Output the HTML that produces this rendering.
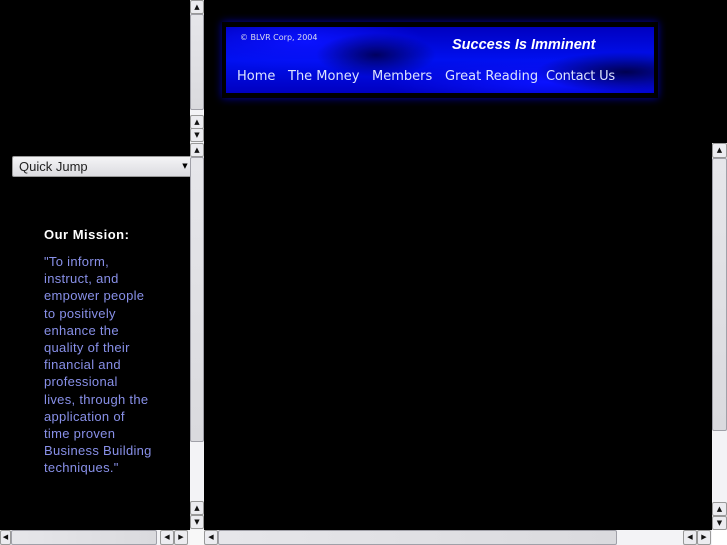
<!DOCTYPE html>
<html><head><meta charset="utf-8"><style>
*{margin:0;padding:0;box-sizing:border-box}
body{width:727px;height:545px;background:#000;position:relative;overflow:hidden;font-family:"DejaVu Sans","Liberation Sans",sans-serif}
.a{position:absolute}
.tr{background:#f3f3f6}
.th{background:linear-gradient(90deg,#e6e6ea,#dadade);border:1px solid #a0a0a8;border-radius:2px}
.thv{background:linear-gradient(180deg,#e6e6ea,#dadade);border:1px solid #a0a0a8;border-radius:2px}
.b{background:#ececf0;border:1px solid #999;border-radius:2px;font-size:7px;line-height:12px;text-align:center;color:#111}
.n{position:absolute;top:69px;font-size:13px;color:#dde4ff}
</style></head><body>
<div class="a" style="left:222px;top:22px;width:436px;height:76px;background:#000;box-shadow:0 0 8px #0000aa"></div>
<div class="a" style="left:226px;top:27px;width:428px;height:66px;background:radial-gradient(ellipse 60px 22px at 150px 28px,#000060,transparent),radial-gradient(ellipse 90px 20px at 400px 45px,#000050,transparent),radial-gradient(ellipse 120px 30px at 80px 15px,#0a12ff,transparent),radial-gradient(ellipse 160px 25px at 320px 55px,#0a12ff,transparent),linear-gradient(180deg,#0000c0,#0010f0 50%,#0000c0);"></div>
<div class="a" style="left:240px;top:33px;font-size:8px;color:#dde">© BLVR Corp, 2004</div>
<div class="a" style="left:452px;top:37px;font-family:'Liberation Sans',sans-serif;font-style:italic;font-weight:bold;font-size:14.5px;color:#fff">Success Is Imminent</div>
<div class="n" style="left:237px">Home</div>
<div class="n" style="left:288px">The Money</div>
<div class="n" style="left:372px">Members</div>
<div class="n" style="left:445px">Great Reading</div>
<div class="n" style="left:546px;letter-spacing:-0.2px">Contact Us</div>
<div class="a" style="left:12px;top:156px;width:182px;height:21px;background:linear-gradient(#f4f4f6,#dcdce0);border:1px solid #999;border-radius:2px;font-size:13px;line-height:19px;padding-left:6px;color:#222;font-family:'Liberation Sans',sans-serif">Quick Jump</div>
<div class="a" style="left:180px;top:157px;width:10px;height:19px;font-size:7px;line-height:19px;text-align:center">▼</div>
<div class="a" style="left:44px;top:227px;font-size:13px;font-weight:bold;color:#fff;letter-spacing:0.5px;font-family:'Liberation Sans',sans-serif">Our Mission:</div>
<div class="a" style="left:44px;top:253px;white-space:nowrap;font-size:13px;line-height:17.2px;color:#8890e8;letter-spacing:0.3px;font-family:'Liberation Sans',sans-serif">"To inform,<br>instruct, and<br>empower people<br>to positively<br>enhance the<br>quality of their<br>financial and<br>professional<br>lives, through the<br>application of<br>time proven<br>Business Building<br>techniques."</div>
<div class="a tr" style="left:190px;top:0;width:14px;height:143px"></div>
<div class="a b" style="left:190px;top:0;width:14px;height:14px">▲</div>
<div class="a thv" style="left:190px;top:14px;width:14px;height:96px"></div>
<div class="a b" style="left:190px;top:115px;width:14px;height:14px">▲</div>
<div class="a b" style="left:190px;top:128px;width:14px;height:14px">▼</div>
<div class="a tr" style="left:190px;top:143px;width:14px;height:387px"></div>
<div class="a b" style="left:190px;top:143px;width:14px;height:14px">▲</div>
<div class="a thv" style="left:190px;top:157px;width:14px;height:285px"></div>
<div class="a b" style="left:190px;top:501px;width:14px;height:14px">▲</div>
<div class="a b" style="left:190px;top:515px;width:14px;height:14px">▼</div>
<div class="a tr" style="left:712px;top:143px;width:15px;height:387px"></div>
<div class="a b" style="left:712px;top:143px;width:15px;height:15px">▲</div>
<div class="a thv" style="left:712px;top:158px;width:15px;height:273px"></div>
<div class="a b" style="left:712px;top:502px;width:15px;height:14px">▲</div>
<div class="a b" style="left:712px;top:516px;width:15px;height:14px">▼</div>
<div class="a tr" style="left:0;top:530px;width:190px;height:15px"></div>
<div class="a b" style="left:0;top:530px;width:11px;height:15px">◀</div>
<div class="a th" style="left:11px;top:530px;width:146px;height:15px"></div>
<div class="a b" style="left:160px;top:530px;width:14px;height:15px">◀</div>
<div class="a b" style="left:174px;top:530px;width:14px;height:15px">▶</div>
<div class="a tr" style="left:190px;top:530px;width:14px;height:15px;background:#f8f8f8"></div>
<div class="a tr" style="left:204px;top:530px;width:523px;height:15px"></div>
<div class="a b" style="left:204px;top:530px;width:14px;height:15px">◀</div>
<div class="a th" style="left:218px;top:530px;width:399px;height:15px"></div>
<div class="a b" style="left:683px;top:530px;width:14px;height:15px">◀</div>
<div class="a b" style="left:697px;top:530px;width:14px;height:15px">▶</div>
<div class="a" style="left:712px;top:530px;width:15px;height:15px;background:#fff"></div>
</body></html>
